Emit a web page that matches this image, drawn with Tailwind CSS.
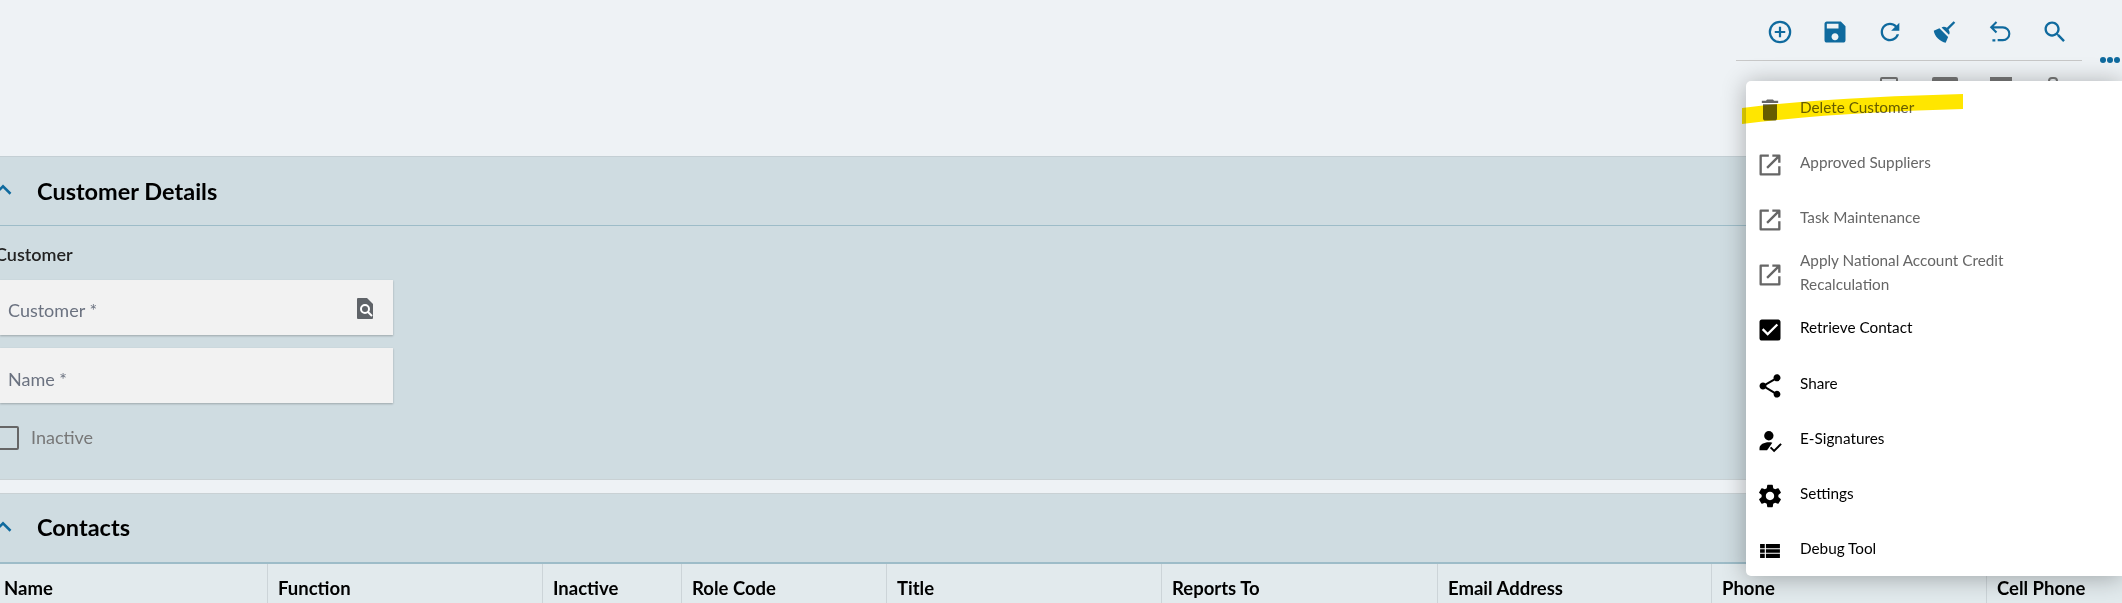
<!DOCTYPE html>
<html lang="en">
<head>
<meta charset="UTF-8" />
<title>Customer</title>
<script src="https://cdn.jsdelivr.net/npm/@tailwindcss/browser@4"></script>
</head>
<body class="bg-[#eef2f5] font-['Lato','Noto_Sans',sans-serif]">
<div class="relative h-[603px] w-[2122px] overflow-hidden">

  <!-- toolbar area -->
  <header class="h-[156px] bg-[#eef2f5] flex flex-col items-end">
    <div class="h-[61px] w-[386px] mr-0 pr-[40px] box-border">
      <div class="h-[61px] border-b border-[#c8c8c8] box-border flex gap-[27px] pl-[30px] pt-[18px] items-start text-[#0f6a9e]">
        <svg class="w-[28px] h-[28px] shrink-0" viewBox="0 0 24 24" fill="none" stroke="currentColor" stroke-width="1.9"><circle cx="12" cy="12" r="8.7"/><path d="M12 7.5v9M7.5 12h9"/></svg>
        <svg class="w-[28px] h-[28px] shrink-0" viewBox="0 0 24 24" fill="currentColor"><path d="M17 3H5c-1.11 0-2 .9-2 2v14c0 1.1.89 2 2 2h14c1.1 0 2-.9 2-2V7l-4-4zm-5 16c-1.66 0-3-1.34-3-3s1.34-3 3-3 3 1.34 3 3-1.34 3-3 3zm3-10H5V5h10v4z"/></svg>
        <svg class="w-[28px] h-[28px] shrink-0" viewBox="0 0 24 24" fill="currentColor"><path d="M17.65 6.35C16.2 4.9 14.21 4 12 4c-4.42 0-7.99 3.58-7.99 8s3.57 8 7.99 8c3.73 0 6.84-2.55 7.73-6h-2.08c-.82 2.33-3.04 4-5.65 4-3.31 0-6-2.69-6-6s2.69-6 6-6c1.66 0 3.14.69 4.22 1.78L13 11h7V4l-2.35 2.35z"/></svg>
        <svg class="w-[28px] h-[28px] shrink-0" viewBox="0 0 24 24" fill="currentColor"><path d="M19.36 2.72L20.78 4.14L15.06 9.85C16.13 11.39 16.28 13.24 15.38 14.44L9.06 8.12C10.26 7.22 12.11 7.37 13.65 8.44L19.36 2.72M5.93 17.57C3.92 15.56 2.69 13.16 2.35 10.92L7.23 8.83L14.67 16.27L12.58 21.15C10.34 20.81 7.94 19.58 5.93 17.57Z"/></svg>
        <svg class="w-[28px] h-[28px] shrink-0" viewBox="0 0 24 24" fill="none" stroke="currentColor" stroke-width="1.8"><path d="M9 3.5L4.5 8 9 12.5M4.5 8H14.5a5.5 5.5 0 0 1 0 11H10M5.5 19.2H8"/></svg>
        <svg class="w-[28px] h-[28px] shrink-0" viewBox="0 0 24 24" fill="currentColor"><path d="M15.5 14h-.79l-.28-.27C15.41 12.59 16 11.11 16 9.5 16 5.91 13.09 3 9.5 3S3 5.91 3 9.5 5.91 16 9.5 16c1.61 0 3.09-.59 4.23-1.57l.27.28v.79l5 4.99L20.49 19l-4.99-5zm-6 0C7.01 14 5 11.99 5 9.5S7.01 5 9.5 5 14 7.01 14 9.5 11.99 14 9.5 14z"/></svg>
      </div>
    </div>
  </header>

  <!-- customer details -->
  <section class="border-t border-[#c4cfd4] bg-[#cfdce1] h-[323px]">
    <div class="h-[68px] border-b border-[#9dbcc8] flex items-center box-content">
      <svg class="w-[30px] h-[30px] -ml-[12px] text-[#0f6a9e] shrink-0 -mt-[2px]" viewBox="0 0 24 24" fill="none" stroke="currentColor" stroke-width="2"><path d="M6 15l6-6 6 6"/></svg>
      <h2 class="ml-[19px] pt-[2px] text-[23.5px] font-bold text-black leading-none">Customer Details</h2>
    </div>
    <div class="w-[393px]">
      <div class="pt-[17px] -ml-[5px] text-[18px] font-semibold text-[#222] leading-[22px]">Customer</div>
      <div class="mt-[15px] h-[55px] pt-[5px] bg-[#f2f2f2] shadow-[0_1px_2px_rgba(0,0,0,0.25)] flex items-center justify-between pl-[8px] pr-[18px] text-[18px] text-[#6b7280]">
        <span>Customer *</span>
        <svg class="w-[20px] h-[24px] -mt-[5px] text-[#5f6368]" viewBox="0 0 20 24"><path fill="currentColor" d="M3 2h9l6 6v14a1 1 0 0 1-1 1H3a1 1 0 0 1-1-1V3a1 1 0 0 1 1-1z"/><circle cx="10" cy="13" r="4" fill="none" stroke="#fff" stroke-width="2"/><path d="M13 16l4 4" stroke="#fff" stroke-width="2"/></svg>
      </div>
      <div class="mt-[13px] h-[55px] pt-[7px] bg-[#f2f2f2] shadow-[0_1px_2px_rgba(0,0,0,0.25)] flex items-center pl-[8px] text-[18px] text-[#6b7280]">Name *</div>
      <div class="mt-[21px] flex items-center">
        <span class="w-[24px] h-[24px] -ml-[5px] rounded-[2px] border-2 border-[#666] shrink-0"></span>
        <span class="ml-[12px] text-[18px] text-[#777]">Inactive</span>
      </div>
    </div>
  </section>

  <div class="h-[13px] bg-[#eef2f5] border-y border-[#c9d1d4] box-content"></div>

  <!-- contacts -->
  <section class="bg-[#cfdce1]">
    <div class="h-[68px] border-b-2 border-[#9dbcc8] flex items-center box-content">
      <svg class="w-[30px] h-[30px] -ml-[12px] text-[#0f6a9e] shrink-0 -mt-[2px]" viewBox="0 0 24 24" fill="none" stroke="currentColor" stroke-width="2"><path d="M6 15l6-6 6 6"/></svg>
      <h2 class="ml-[19px] text-[23.5px] font-bold text-black leading-none">Contacts</h2>
    </div>
    <div class="flex h-[42px] bg-[#e2eaed] text-[18.5px] font-bold text-black items-center">
      <div class="w-[268px] h-full flex items-center pt-[7px] pl-[4px] border-r border-[#ccd4d8]">Name</div>
      <div class="w-[275px] h-full flex items-center pt-[7px] pl-[10px] border-r border-[#ccd4d8]">Function</div>
      <div class="w-[139px] h-full flex items-center pt-[7px] pl-[10px] border-r border-[#ccd4d8]">Inactive</div>
      <div class="w-[205px] h-full flex items-center pt-[7px] pl-[10px] border-r border-[#ccd4d8]">Role Code</div>
      <div class="w-[275px] h-full flex items-center pt-[7px] pl-[10px] border-r border-[#ccd4d8]">Title</div>
      <div class="w-[276px] h-full flex items-center pt-[7px] pl-[10px] border-r border-[#ccd4d8]">Reports To</div>
      <div class="w-[274px] h-full flex items-center pt-[7px] pl-[10px] border-r border-[#ccd4d8]">Email Address</div>
      <div class="w-[275px] h-full flex items-center pt-[7px] pl-[10px] border-r border-[#ccd4d8]">Phone</div>
      <div class="pl-[10px] pt-[7px]">Cell Phone</div>
    </div>
  </section>

  <!-- more button -->
  <div class="absolute left-[2100px] top-[57px] flex gap-[1px]">
    <span class="w-[6px] h-[6px] rounded-full bg-[#0f6a9e]"></span>
    <span class="w-[6px] h-[6px] rounded-full bg-[#0f6a9e]"></span>
    <span class="w-[6px] h-[6px] rounded-full bg-[#0f6a9e]"></span>
  </div>

  <!-- second toolbar row, mostly under the menu -->
  <div class="absolute left-[1880px] top-[77px] flex text-[#777]">
    <span class="w-[18px] h-[8px] border-2 border-[#777] rounded-t-[2px]"></span>
    <span class="w-[26px] h-[8px] ml-[34px] bg-[#777] rounded-t-[2px]"></span>
    <span class="w-[22px] h-[8px] ml-[32px] bg-[#777]"></span>
    <span class="w-[10px] h-[8px] ml-[36px] border-2 border-[#777] rounded-full"></span>
  </div>

  <!-- overflow menu -->
  <div class="absolute left-[1746px] top-[81px] w-[376px] h-[495px] bg-white rounded-l-[5px] shadow-[0_2px_24px_rgba(0,0,0,0.3)] pt-[1px] text-[15.3px] leading-[24px]">
    <div class="h-[55.2px] flex items-center text-[#666]">
      <svg class="w-[28px] h-[28px] ml-[10px] text-[#666] shrink-0" viewBox="0 0 24 24" fill="currentColor"><path d="M6 19c0 1.1.9 2 2 2h8c1.1 0 2-.9 2-2V7H6v12zM19 4h-3.5l-1-1h-5l-1 1H5v2h14V4z"/></svg>
      <span class="ml-[16px] -mt-[6px]">Delete Customer</span>
    </div>
    <div class="h-[55.2px] flex items-center text-[#666]">
      <svg class="w-[28px] h-[28px] ml-[10px] shrink-0" viewBox="0 0 24 24" fill="none" stroke="currentColor" stroke-width="2" stroke-linejoin="round"><path d="M11 4H4v16h16v-7M14 4h6v6M20 4L9.5 14.5"/></svg>
      <span class="ml-[16px] -mt-[6px]">Approved Suppliers</span>
    </div>
    <div class="h-[55.2px] flex items-center text-[#666]">
      <svg class="w-[28px] h-[28px] ml-[10px] shrink-0" viewBox="0 0 24 24" fill="none" stroke="currentColor" stroke-width="2" stroke-linejoin="round"><path d="M11 4H4v16h16v-7M14 4h6v6M20 4L9.5 14.5"/></svg>
      <span class="ml-[16px] -mt-[6px]">Task Maintenance</span>
    </div>
    <div class="h-[55.2px] flex items-center text-[#666]">
      <svg class="w-[28px] h-[28px] ml-[10px] shrink-0" viewBox="0 0 24 24" fill="none" stroke="currentColor" stroke-width="2" stroke-linejoin="round"><path d="M11 4H4v16h16v-7M14 4h6v6M20 4L9.5 14.5"/></svg>
      <span class="ml-[16px] -mt-[6px] w-[230px]">Apply National Account Credit Recalculation</span>
    </div>
    <div class="h-[55.2px] flex items-center text-black">
      <svg class="w-[28px] h-[28px] ml-[10px] shrink-0" viewBox="0 0 24 24" fill="currentColor"><path d="M19 3H5c-1.11 0-2 .9-2 2v14c0 1.1.89 2 2 2h14c1.11 0 2-.9 2-2V5c0-1.1-.89-2-2-2zm-9 14l-5-5 1.41-1.41L10 14.17l7.59-7.59L19 8l-9 9z"/></svg>
      <span class="ml-[16px] -mt-[6px]">Retrieve Contact</span>
    </div>
    <div class="h-[55.2px] flex items-center text-black">
      <svg class="w-[28px] h-[28px] ml-[10px] shrink-0" viewBox="0 0 24 24" fill="currentColor"><path d="M18 16.08c-.76 0-1.44.3-1.96.77L8.91 12.7c.05-.23.09-.46.09-.7s-.04-.47-.09-.7l7.05-4.11c.54.5 1.25.81 2.04.81 1.66 0 3-1.34 3-3s-1.34-3-3-3-3 1.34-3 3c0 .24.04.47.09.7L8.04 9.81C7.5 9.31 6.79 9 6 9c-1.66 0-3 1.34-3 3s1.34 3 3 3c.79 0 1.5-.31 2.04-.81l7.12 4.16c-.05.21-.08.43-.08.65 0 1.61 1.31 2.92 2.92 2.92 1.61 0 2.92-1.31 2.92-2.92s-1.31-2.92-2.92-2.92z"/></svg>
      <span class="ml-[16px] -mt-[6px]">Share</span>
    </div>
    <div class="h-[55.2px] flex items-center text-black">
      <svg class="w-[28px] h-[28px] ml-[10px] shrink-0" viewBox="0 0 24 24"><circle cx="11" cy="7.5" r="4" fill="currentColor"/><path fill="currentColor" d="M3 20v-2c0-3 4-5 8-5 1 0 2 .1 3 .4L9.5 20z"/><path d="M12.5 17.5l3 3 6-6" fill="none" stroke="currentColor" stroke-width="1.7"/></svg>
      <span class="ml-[16px] -mt-[6px]">E-Signatures</span>
    </div>
    <div class="h-[55.2px] flex items-center text-black">
      <svg class="w-[28px] h-[28px] ml-[10px] shrink-0" viewBox="0 0 24 24" fill="currentColor"><path d="M19.14 12.94c.04-.3.06-.61.06-.94 0-.32-.02-.64-.07-.94l2.03-1.58c.18-.14.23-.41.12-.61l-1.92-3.32c-.12-.22-.37-.29-.59-.22l-2.39.96c-.5-.38-1.03-.7-1.62-.94l-.36-2.54c-.04-.24-.24-.41-.48-.41h-3.84c-.24 0-.43.17-.47.41l-.36 2.54c-.59.24-1.13.57-1.62.94l-2.39-.96c-.22-.08-.47 0-.59.22L2.74 8.87c-.12.21-.08.47.12.61l2.03 1.58c-.05.3-.09.63-.09.94s.02.64.07.94l-2.03 1.58c-.18.14-.23.41-.12.61l1.92 3.32c.12.22.37.29.59.22l2.39-.96c.5.38 1.03.7 1.62.94l.36 2.54c.05.24.24.41.48.41h3.84c.24 0 .44-.17.47-.41l.36-2.54c.59-.24 1.13-.56 1.62-.94l2.39.96c.22.08.47 0 .59-.22l1.92-3.32c.12-.22.07-.47-.12-.61l-2.01-1.58zM12 15.6c-1.98 0-3.6-1.62-3.6-3.6s1.62-3.6 3.6-3.6 3.6 1.62 3.6 3.6-1.62 3.6-3.6 3.6z"/></svg>
      <span class="ml-[16px] -mt-[6px]">Settings</span>
    </div>
    <div class="h-[55.2px] flex items-center text-black">
      <svg class="w-[28px] h-[28px] ml-[10px] shrink-0" viewBox="0 0 24 24" fill="currentColor"><path d="M3.5 6h4v3.600h-4zM8.500 6h12v3.600h-12zM3.500 10.400h4v3.200h-4zM8.500 10.400h12v3.200h-12zM3.500 14.400h4v3.600h-4zM8.500 14.400h12v3.600h-12z"/></svg>
      <span class="ml-[16px] -mt-[6px]">Debug Tool</span>
    </div>
  </div>

  <!-- yellow highlighter mark over the delete item -->
  <svg class="absolute left-[1742px] top-[92px] w-[224px] h-[34px] mix-blend-multiply" viewBox="0 0 224 34"><path fill="#ffe600" d="M0 16C70 7 150 4 221 2v15C150 19 70 23 0 32z"/></svg>
</div>
</body>
</html>
